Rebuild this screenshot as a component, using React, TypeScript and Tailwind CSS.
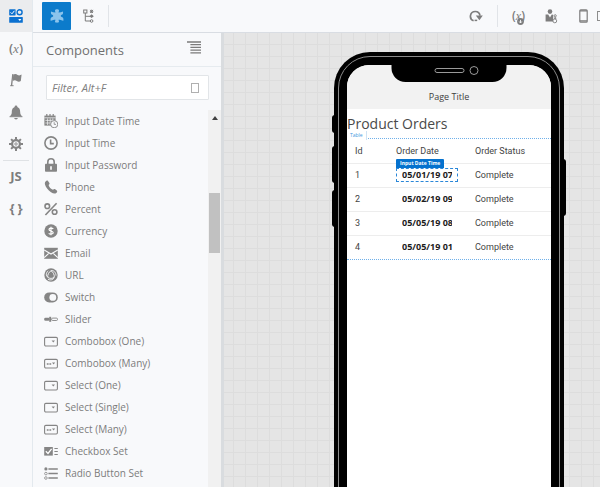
import React from "react";

type IconProps = { className?: string };

const iconBase = "block shrink-0";

/* ---------- toolbar and rail icons ---------- */

function DesignerIcon() {
  return (
    <svg viewBox="0 0 14 14" className={`${iconBase} h-[14px] w-[14px]`} fill="none">
      <rect x="0.2" y="0.2" width="6.4" height="6.2" rx="0.6" fill="#0b70d0" />
      <path d="M1.6 3.4 L3 4.8 L5.4 1.8" stroke="#fff" strokeWidth="1" />
      <circle cx="10.6" cy="3.2" r="2.5" stroke="#0b70d0" strokeWidth="1.4" />
      <rect x="0.2" y="8" width="13.6" height="5.8" rx="0.6" fill="#0b70d0" />
      <path d="M9.2 9.9 h3.2 l-1.6 2 z" fill="#fff" />
    </svg>
  );
}

function PuzzleIcon() {
  return (
    <svg viewBox="0 0 14 14" className={`${iconBase} h-[14px] w-[14px]`} fill="#8cc4ec">
      <path d="M5.4 3.6 C5.6 3 5 2.6 5 1.6 C5 0.6 6 0.2 7 0.2 C8 0.2 9 0.6 9 1.6 C9 2.6 8.4 3 8.6 3.6 C10 3.4 11.6 2.8 13 2.4 C13.2 3.8 13 5 12.2 5.6 C11.6 6 10.8 6 10.8 7 C10.8 8 11.6 7.8 12.4 8.2 C13.4 8.6 13.6 9.8 13.4 11.8 C11.6 11.4 10 10.8 8.6 10.8 C8.4 11.4 9 11.6 9 12.6 C9 13.4 8 13.8 7 13.8 C6 13.8 5 13.4 5 12.6 C5 11.6 5.6 11.4 5.4 10.8 C4 10.8 2.4 11.4 0.6 11.8 C0.4 9.8 0.6 8.6 1.6 8.2 C2.4 7.8 3.2 8 3.2 7 C3.2 6 2.4 6 1.8 5.6 C1 5 0.8 3.8 1 2.4 C2.4 2.8 4 3.4 5.4 3.6 Z" />
    </svg>
  );
}

function TreeIcon() {
  return (
    <svg viewBox="0 0 11 14" className={`${iconBase} h-[14px] w-[11px]`} fill="none" stroke="#7b7b7b" strokeWidth="1">
      <rect x="0.7" y="1" width="3.2" height="3" />
      <path d="M2.3 4 V12 H7 M2.3 7.3 H7" />
      <path d="M7.4 0.9 L9.8 3.9 M9.8 0.9 L7.4 3.9" />
      <circle cx="8.6" cy="2.4" r="1.2" />
      <path d="M6.4 7.3 L8.6 5.2 L10.8 7.3 L8.6 9 Z" fill="#7b7b7b" stroke="none" />
      <circle cx="8.6" cy="12" r="1.3" />
    </svg>
  );
}

function RedoIcon() {
  return (
    <svg viewBox="0 0 14 12" className={`${iconBase} h-3 w-[14px]`} fill="none">
      <path d="M4.6 10.8 A4.8 4.8 0 1 1 11 5.6" stroke="#7d7d7d" strokeWidth="1.7" />
      <path d="M5.6 10.4 h2.6" stroke="#7d7d7d" strokeWidth="1.5" />
      <path d="M6.8 5.6 h7 l-3.4 4.6 z" fill="#7d7d7d" />
    </svg>
  );
}

function PersonIcon() {
  return (
    <svg viewBox="0 0 13 15" className={`${iconBase} h-[15px] w-[13px]`}>
      <circle cx="5" cy="2.6" r="2.3" fill="#7d7d7d" />
      <path d="M0.6 5.6 L3.2 5.6 L5 8.4 L6.8 5.6 L8.2 5.8 V12.6 H0.6 Z" fill="#7d7d7d" />
      <circle cx="10.2" cy="6.8" r="1.1" fill="none" stroke="#7d7d7d" strokeWidth="0.9" />
      <path d="M10.2 8 v2 M9 9.2 h2.4" stroke="#7d7d7d" strokeWidth="0.9" />
      <circle cx="9.8" cy="11.9" r="1.9" fill="#f8f9fb" stroke="#7d7d7d" strokeWidth="0.9" />
    </svg>
  );
}

function PhoneOutlineIcon() {
  return (
    <svg viewBox="0 0 9 14" className={`${iconBase} h-[14px] w-[9px]`} fill="none" stroke="#7d7d7d">
      <rect x="0.8" y="0.8" width="7.4" height="12.4" rx="1" strokeWidth="1.2" />
      <path d="M1 1.8 h7 M1 11.8 h7" strokeWidth="1.2" />
    </svg>
  );
}

function TabletOutlineIcon() {
  return (
    <svg viewBox="0 0 14 10" className={`${iconBase} h-[10px] w-[14px]`} fill="none" stroke="#8d8d8d">
      <rect x="0.5" y="0.5" width="13" height="9" />
      <path d="M11.6 0.5 v9" />
    </svg>
  );
}

function EventBadge() {
  return (
    <svg viewBox="0 0 6 6" className="absolute right-px -bottom-px h-[7px] w-[7px]">
      <circle cx="3" cy="3" r="2.9" fill="#7d7d7d" />
      <path d="M3 1.6 v2.6 M1.9 3 l1.1 1.3 l1.1 -1.3" stroke="#f8f9fb" strokeWidth="0.8" fill="none" />
    </svg>
  );
}

function FlagIcon() {
  return (
    <svg viewBox="0 0 12 14" className={`${iconBase} h-[14px] w-3`} fill="#858585">
      <path d="M2.2 1 L3.4 1.2 L2.2 13 H0.8 Z" />
      <path d="M0.2 12.2 h3.4 v1 h-3.4z" />
      <path d="M3.2 1.6 C5 0.4 6.6 1 7.6 2 C9 2.8 10.4 2.4 11.6 1.6 L10.8 8 C9.4 9 8 8.8 6.8 8 C5.4 7 4 7.2 2.8 8 Z" />
    </svg>
  );
}

function BellIcon() {
  return (
    <svg viewBox="0 0 14 15" className={`${iconBase} h-[15px] w-[14px]`} fill="#858585">
      <circle cx="7" cy="2" r="1.4" />
      <path d="M7 2 C10.4 2 11.2 4.6 11.2 7.2 C11.2 9.6 12.2 10.4 13.4 11.4 H0.6 C1.8 10.4 2.8 9.6 2.8 7.2 C2.8 4.6 3.6 2 7 2 Z" />
      <path d="M0.6 11.2 h12.8 v1 h-12.8z" />
      <path d="M5.2 13 h3.6 a1.8 1.4 0 0 1 -3.6 0z" />
    </svg>
  );
}

function GearIcon() {
  return (
    <svg viewBox="0 0 14 14" className={`${iconBase} h-[14px] w-[14px]`} fill="none" stroke="#858585">
      <circle cx="7" cy="7" r="3.9" strokeWidth="2.2" />
      <circle cx="7" cy="7" r="1.2" strokeWidth="0.9" />
      <path
        d="M7 0 V3 M7 11 V14 M0 7 H3 M11 7 H14 M2.1 2.1 L4.2 4.2 M9.8 9.8 L11.9 11.9 M11.9 2.1 L9.8 4.2 M4.2 9.8 L2.1 11.9"
        strokeWidth="2"
      />
    </svg>
  );
}

function CollapseIcon() {
  return (
    <svg viewBox="0 0 14 13" className={`${iconBase} h-[13px] w-[14px]`} stroke="#7b7b7b" strokeWidth="1.3">
      <path d="M0 1 h14 M3.4 3.7 h10.6 M3.4 6.4 h10.6 M3.4 9.1 h10.6 M3.4 11.8 h10.6" />
    </svg>
  );
}

/* ---------- component palette icons ---------- */

const G = "#858585";

function Glyph({ children }: { children: React.ReactNode }) {
  return (
    <svg viewBox="0 0 14 14" className={`${iconBase} h-[14px] w-[14px]`} fill="none" aria-hidden="true">
      {children}
    </svg>
  );
}

const DateTimeGlyph = () => (
  <Glyph>
    <path d="M0.4 1.6 h11.2 v10 h-11.2z" fill={G} />
    <path d="M2.8 0 v2.6 M6 0 v2.6 M9.2 0 v2.6" stroke={G} strokeWidth="1.2" />
    <path d="M0.4 3.8 h11.2 M1.4 6.4 h9.2 M1.4 9 h9.2 M3.6 4.4 v6.6 M6.2 4.4 v6.6 M8.8 4.4 v6.6" stroke="#f8f9fb" strokeWidth="0.7" />
    <circle cx="10.2" cy="10.2" r="3.6" fill="#f8f9fb" stroke={G} strokeWidth="0.9" />
    <path d="M10.2 8.2 V10.4 H12" stroke={G} strokeWidth="0.8" />
  </Glyph>
);

const TimeGlyph = () => (
  <Glyph>
    <circle cx="7" cy="7" r="6.1" stroke={G} strokeWidth="1.6" />
    <path d="M6.6 3.6 V7.6 H9.8" stroke={G} strokeWidth="1.6" />
  </Glyph>
);

const PasswordGlyph = () => (
  <Glyph>
    <path d="M3.8 6 V4 a3.2 3.2 0 0 1 6.4 0 V6" stroke={G} strokeWidth="1.6" />
    <rect x="1" y="5.8" width="12" height="8" rx="0.8" fill={G} />
    <path d="M6.2 8.2 h1.6 v3.6 h-1.6z" fill="#fff" />
  </Glyph>
);

const PhoneGlyph = () => (
  <Glyph>
    <path
      d="M1.6 1.4 C2.4 0.4 3.4 0.2 4 1 L5.4 3 C5.8 3.8 5.4 4.4 4.6 5 C5 7 7 9.2 9 9.8 C9.8 9 10.4 8.8 11.2 9.2 L12.8 10.4 C13.6 11.2 13.2 12.2 12.2 12.9 C11.2 13.8 9.2 13.6 7 12.2 C4 10.4 1.6 7.2 1 4.6 C0.7 3 0.9 2.2 1.6 1.4 Z"
      fill={G}
    />
  </Glyph>
);

const PercentGlyph = () => (
  <Glyph>
    <circle cx="3.3" cy="4.2" r="2.3" stroke={G} strokeWidth="1.6" />
    <circle cx="10.6" cy="10" r="2.3" stroke={G} strokeWidth="1.6" />
    <path d="M12.6 1.2 L1.4 13" stroke={G} strokeWidth="1.6" />
  </Glyph>
);

const CurrencyGlyph = () => (
  <Glyph>
    <circle cx="7" cy="7" r="6.7" fill={G} />
    <path
      d="M9.3 4.8 C8.6 4 5 3.6 5 5.5 C5 7.2 9.2 6.8 9.2 8.7 C9.2 10.4 5.6 10.2 4.7 9.3 M7 2.8 V11.2"
      stroke="#fff"
      strokeWidth="1.2"
    />
  </Glyph>
);

const EmailGlyph = () => (
  <Glyph>
    <rect x="0.2" y="1.8" width="13.6" height="11" fill={G} />
    <path d="M0.2 4 L7 8 L13.8 4 M0.2 11.6 L5 7.2 M13.8 11.6 L9 7.2" stroke="#f8f9fb" strokeWidth="1.1" />
  </Glyph>
);

const UrlGlyph = () => (
  <Glyph>
    <circle cx="7" cy="7" r="6.7" fill={G} />
    <path
      d="M7 2.8 C8.6 3.2 11 7.4 10.2 9.2 C9.4 10.8 4.6 10.8 3.8 9.2 C3 7.4 5.4 3.2 7 2.8 Z M7 2.8 C9.6 1.8 12 4.6 12 7.6 M10.2 9.2 C9.6 11.8 6.4 12.6 4 11.4 M3.8 9.2 C1.6 8 2 4.6 4.2 2.8"
      stroke="#f8f9fb"
      strokeWidth="0.9"
    />
  </Glyph>
);

const SwitchGlyph = () => (
  <Glyph>
    <rect x="0.2" y="2.4" width="13.6" height="10" rx="5" fill={G} />
    <circle cx="8.8" cy="7.4" r="3.4" fill="#f8f9fb" />
  </Glyph>
);

const SliderGlyph = () => (
  <Glyph>
    <rect x="0.2" y="5.8" width="5.4" height="3" rx="1.3" fill={G} />
    <rect x="5.2" y="4.8" width="2" height="5" fill={G} />
    <rect x="7.6" y="6.1" width="5.9" height="2.4" rx="1.1" stroke={G} strokeWidth="0.9" />
  </Glyph>
);

const BoxOneGlyph = () => (
  <Glyph>
    <rect x="0.6" y="3.4" width="12.8" height="8.6" rx="1.2" stroke={G} strokeWidth="1.1" />
    <path d="M7.6 6.4 h3.4 l-1.7 2.2z" fill={G} />
  </Glyph>
);

const BoxManyGlyph = () => (
  <Glyph>
    <rect x="0.6" y="3.4" width="12.8" height="8.6" rx="1.2" stroke={G} strokeWidth="1.1" />
    <path d="M2.8 7.2 h1.8 v1.6 h-1.8z M5.4 7.2 h1.8 v1.6 h-1.8z M8 6.4 h3.2 l-1.6 2.2z" fill={G} />
  </Glyph>
);

const CheckSetGlyph = () => (
  <Glyph>
    <rect x="0.2" y="3" width="8.6" height="8.6" fill={G} />
    <path d="M1.8 7.2 L4 9.4 L7.6 4.8" stroke="#fff" strokeWidth="1.3" />
    <path d="M10.4 4.5 h3.4 M10.4 7.5 h3.4 M10.4 10.5 h3.4" stroke={G} strokeWidth="1" />
  </Glyph>
);

const RadioSetGlyph = () => (
  <Glyph>
    <circle cx="1.9" cy="2.9" r="1.6" fill={G} />
    <circle cx="1.9" cy="7.6" r="1.3" stroke={G} strokeWidth="0.8" />
    <circle cx="1.9" cy="12" r="1.3" stroke={G} strokeWidth="0.8" />
    <path d="M4.4 2.9 h9.4 M4.4 7.6 h9.4 M4.4 12 h9.4" stroke={G} strokeWidth="1.5" />
  </Glyph>
);

const palette: { label: string; Icon: React.ComponentType }[] = [
  { label: "Input Date Time", Icon: DateTimeGlyph },
  { label: "Input Time", Icon: TimeGlyph },
  { label: "Input Password", Icon: PasswordGlyph },
  { label: "Phone", Icon: PhoneGlyph },
  { label: "Percent", Icon: PercentGlyph },
  { label: "Currency", Icon: CurrencyGlyph },
  { label: "Email", Icon: EmailGlyph },
  { label: "URL", Icon: UrlGlyph },
  { label: "Switch", Icon: SwitchGlyph },
  { label: "Slider", Icon: SliderGlyph },
  { label: "Combobox (One)", Icon: BoxOneGlyph },
  { label: "Combobox (Many)", Icon: BoxManyGlyph },
  { label: "Select (One)", Icon: BoxOneGlyph },
  { label: "Select (Single)", Icon: BoxOneGlyph },
  { label: "Select (Many)", Icon: BoxManyGlyph },
  { label: "Checkbox Set", Icon: CheckSetGlyph },
  { label: "Radio Button Set", Icon: RadioSetGlyph },
];

const orders = [
  { id: 1, date: "05/01/19 07", status: "Complete" },
  { id: 2, date: "05/02/19 09", status: "Complete" },
  { id: 3, date: "05/05/19 08", status: "Complete" },
  { id: 4, date: "05/05/19 01", status: "Complete" },
];

/* ---------- regions ---------- */

function VariableMark({ className = "" }: IconProps) {
  return (
    <span className={`leading-4 font-semibold text-[#7d7d7d] ${className}`}>
      (<i className="font-['Liberation_Serif',serif] font-normal">x</i>)
    </span>
  );
}

function Rail() {
  const cell = "flex h-8 w-full items-center justify-center";
  return (
    <nav aria-label="Views" className="flex w-[33px] shrink-0 flex-col border-r border-[#e3e9ee]">
      <button aria-label="Designer" className={`${cell} bg-[#ebecee]`}>
        <DesignerIcon />
      </button>
      <button aria-label="Variables" className={cell}>
        <VariableMark className="text-[13px]" />
      </button>
      <button aria-label="Actions" className={cell}>
        <FlagIcon />
      </button>
      <button aria-label="Events" className={cell}>
        <BellIcon />
      </button>
      <button aria-label="Settings" className={cell}>
        <GearIcon />
      </button>
      <hr className="mx-[3px] border-[#dfe2e5]" />
      <button aria-label="JavaScript" className={`${cell} text-[13px] font-bold text-[#7d7d7d]`}>
        JS
      </button>
      <button aria-label="JSON" className={`${cell} gap-[3px] text-[13px] font-bold text-[#7d7d7d]`}>
        <span>{"{"}</span>
        <span>{"}"}</span>
      </button>
    </nav>
  );
}

function Toolbar() {
  return (
    <header className="flex h-[33px] shrink-0 items-center overflow-hidden border-b border-[#d9dde3] pl-[9px]">
      <button aria-label="Components" className="flex h-7 w-[29px] items-center justify-center rounded-[1px] bg-[#0c7bcb]">
        <PuzzleIcon />
      </button>
      <button aria-label="Page structure" className="ml-3 flex h-7 w-[11px] items-center justify-center">
        <TreeIcon />
      </button>
      <span className="ml-[14px] h-[22px] w-px bg-[#e1e4e8]" />
      <div className="-mr-[11px] ml-auto flex items-center">
        <button aria-label="Reload">
          <RedoIcon />
        </button>
        <span className="mx-[14px] h-[22px] w-px bg-[#e1e4e8]" />
        <button aria-label="Variable events" className="relative flex h-4 items-center text-[12px]">
          <VariableMark />
          <EventBadge />
        </button>
        <button aria-label="User roles" className="ml-5">
          <PersonIcon />
        </button>
        <button aria-label="Phone size" className="ml-[21px]">
          <PhoneOutlineIcon />
        </button>
        <button aria-label="Tablet size" className="ml-[9px]">
          <TabletOutlineIcon />
        </button>
      </div>
    </header>
  );
}

function ComponentsPanel() {
  return (
    <aside className="flex w-[191px] shrink-0 flex-col border-r-[3px] border-[#d9dcdf]">
      <div className="flex h-[34px] shrink-0 items-center justify-between border-b border-[#e6ebef] pr-5 pl-[13px]">
        <h2 className="text-[13px] leading-5 text-[#707070]">Components</h2>
        <button aria-label="Collapse all" className="pb-1">
          <CollapseIcon />
        </button>
      </div>
      <div className="mx-[13px] mt-2 mb-[10px] flex h-[25px] w-[163px] shrink-0 items-center rounded-[1px] border border-[#e2e5e8] bg-white pr-[9px] pl-[5px]">
        <input
          aria-label="Filter components"
          placeholder="Filter, Alt+F"
          className="h-full min-w-0 flex-1 bg-transparent text-[11px] italic outline-none placeholder:text-[#808080]"
        />
        <span className="h-[10px] w-2 border border-[#b0b0b0]" />
      </div>
      <div className="flex min-h-0 flex-1">
        <ul className="flex-1 overflow-hidden pl-[11px]">
          {palette.map(({ label, Icon }) => (
            <li key={label}>
              <button className="flex h-[22px] items-center gap-[7px] text-[10px] leading-4 whitespace-nowrap text-[#7c7c7c]">
                <Icon />
                {label}
              </button>
            </li>
          ))}
        </ul>
        <div className="flex w-[13px] shrink-0 flex-col items-center bg-[#f1f1f1]">
          <svg viewBox="0 0 6 4" className="mt-[6px] h-1 w-[6px] shrink-0">
            <path d="M3 0 L6 4 H0 Z" fill="#404040" />
          </svg>
          <div className="mt-[73px] h-[60px] w-[11px] shrink-0 bg-[#c1c1c1]" />
        </div>
      </div>
    </aside>
  );
}

function OrdersTable() {
  return (
    <div className="relative border-y border-dotted border-[#6fb0ea]">
      <span className="absolute -top-2 left-0 h-[9px] w-5 border-r border-[#cfe3f4] bg-white pl-[3px] text-[5px] leading-[9px] text-[#3f97de]">
        Table
      </span>
      <table className="h-[120px] w-full table-fixed border-collapse text-left font-['Roboto',sans-serif] text-[9px] leading-3 text-[#444444]">
        <thead>
          <tr className="h-6">
            <th className="w-[49px] pl-2 font-normal">Id</th>
            <th className="w-[79px] font-normal">Order Date</th>
            <th className="font-normal">Order Status</th>
          </tr>
        </thead>
        <tbody>
          {orders.map((o, i) => (
            <tr key={o.id} className="h-6 border-t border-[#ededed]">
              <td className="pl-2">{o.id}</td>
              <td>
                <div
                  className={
                    i === 0
                      ? "relative w-[62px] border border-dashed border-[#2a87d8] px-[5px]"
                      : "w-[62px] border border-transparent px-[5px]"
                  }
                >
                  {i === 0 && (
                    <span className="absolute -top-[10px] -left-px rounded-t-[1px] bg-[#0572ce] px-1 font-['Open_Sans',sans-serif] text-[5px] leading-[9px] font-bold whitespace-nowrap text-white">
                      Input Date Time
                    </span>
                  )}
                  <input
                    aria-label={`Order ${o.id} date`}
                    readOnly
                    defaultValue={o.date}
                    className="block h-3 w-full bg-transparent font-['Open_Sans',sans-serif] text-[9px] leading-3 font-bold text-[#1c1c1c] outline-none"
                  />
                </div>
              </td>
              <td>{o.status}</td>
            </tr>
          ))}
        </tbody>
      </table>
    </div>
  );
}

function PhonePreview() {
  return (
    <div className="relative h-[480px] w-[230px] shrink-0">
      <span className="absolute top-[63px] -left-[2px] h-[18px] w-2 rounded-l-[3px] bg-black" />
      <span className="absolute top-[94px] -left-[2px] h-[37px] w-2 rounded-l-[3px] bg-black" />
      <span className="absolute top-[138px] -left-[2px] h-[37px] w-2 rounded-l-[3px] bg-black" />
      <span className="absolute top-[107px] -right-[2px] h-[57px] w-2 rounded-r-[3px] bg-black" />
      <div className="relative h-full rounded-[36px] bg-black p-1">
        <div className="h-full rounded-[32px] border border-[#8a8a8a] bg-black p-2">
          <div className="relative h-full overflow-hidden rounded-[22px] bg-white">
            <div className="absolute top-0 left-1/2 flex h-[17px] w-[115px] -translate-x-1/2 items-start justify-center gap-[5px] rounded-b-[14px] bg-black pt-px pl-[14px]">
              <span className="mt-[2px] h-[5px] w-[30px] rounded-full border border-[#9a9a9a]" />
              <span className="h-[9px] w-[9px] rounded-full border border-[#9a9a9a]" />
            </div>
            <div className="flex h-[44px] items-end justify-center bg-[#f2f2f2] pb-1">
              <span className="text-[9px] leading-4 text-[#404040]">Page Title</span>
            </div>
            <h1 className="mb-1 pt-[5px] text-[14px] leading-5 whitespace-nowrap text-[#4a4a4a]">Product Orders</h1>
            <OrdersTable />
          </div>
        </div>
      </div>
    </div>
  );
}

export default function App() {
  return (
    <div className="flex h-screen overflow-hidden bg-[#f8f9fb] font-['Open_Sans','Noto_Sans',sans-serif]">
      <Rail />
      <div className="flex min-w-0 flex-1 flex-col">
        <Toolbar />
        <div className="flex min-h-0 flex-1">
          <ComponentsPanel />
          <main className="min-w-0 flex-1 overflow-hidden bg-[#e5e5e5] bg-[linear-gradient(to_right,#dddddd_1px,transparent_1px),linear-gradient(to_bottom,#dddddd_1px,transparent_1px)] bg-[size:12px_12px] bg-[position:9px_-1px] pt-[19px] pl-[110px]">
            <PhonePreview />
          </main>
        </div>
      </div>
    </div>
  );
}
